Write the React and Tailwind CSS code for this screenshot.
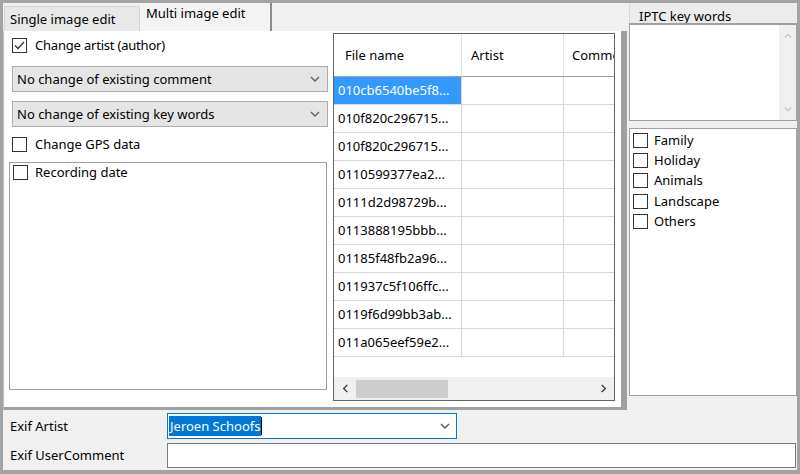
import React from 'react';

const files = [
  '010cb6540be5f8...',
  '010f820c296715...',
  '010f820c296715...',
  '0110599377ea2...',
  '0111d2d98729b...',
  '0113888195bbb...',
  '01185f48fb2a96...',
  '011937c5f106ffc...',
  '0119f6d99bb3ab...',
  '011a065eef59e2...',
];

const keywords = ['Family', 'Holiday', 'Animals', 'Landscape', 'Others'];

function Check({ checked, className = '' }) {
  return (
    <span className={`flex h-[15px] w-[15px] shrink-0 items-center justify-center border border-[#333] bg-white ${className}`}>
      {checked && (
        <svg width="13" height="13" viewBox="0 0 13 13">
          <polyline points="2,6.5 5,9.5 11,3" fill="none" stroke="#333" strokeWidth="1.3" />
        </svg>
      )}
    </span>
  );
}

function Chevron({ color = '#555', dir = 'down', size = 12 }) {
  const pts = {
    down: '2,4 6,8 10,4',
    up: '2,8 6,4 10,8',
    left: '8,2 4,6 8,10',
    right: '4,2 8,6 4,10',
  }[dir];
  return (
    <svg width={size} height={size} viewBox="0 0 12 12">
      <polyline points={pts} fill="none" stroke={color} strokeWidth="1.4" />
    </svg>
  );
}

function Combo({ text }) {
  return (
    <div className="flex h-[26px] w-[316px] items-center justify-between border border-[#adadad] bg-[#e5e5e5] pl-[4px] pr-[6px]">
      <span>{text}</span>
      <Chevron color="#606060" />
    </div>
  );
}

export default function App() {
  return (
    <div
      className="flex h-[474px] w-[800px] flex-col border-x-[3px] border-t-[3px] border-b-4 border-[#a3a3a3] bg-[#f0f0f0] text-[13px] leading-none text-black"
      style={{ fontFamily: '"Noto Sans", "Open Sans", sans-serif' }}
    >
      {/* top split */}
      <div className="flex h-[407px]">
        {/* tab control */}
        <div className="flex w-[624px] flex-col">
          <div className="flex h-[28px] items-end">
            <div className="ml-[1px] flex h-[25px] w-[136px] items-center border border-b-0 border-[#d4d4d4] bg-[#e8e8e8] pl-[5px]">
              Single image edit
            </div>
            <div className="flex h-[28px] w-[132px] items-start border-r-2 border-[#8c8c8c] bg-[#f3f3f3] pl-[6px] pt-[4px]">
              Multi image edit
            </div>
          </div>
          <div className="flex flex-1 border-b-[3px] border-l border-r-[6px] border-[#a0a0a0] border-l-[#c0c0c0] bg-white">
            {/* left column */}
            <div className="flex w-[329px] flex-col pl-[5px]">
              <div className="mt-[7px] ml-[3px] flex items-center gap-[8px]">
                <Check checked />
                <span className="tracking-[-0.2px]">Change artist (author)</span>
              </div>
              <div className="mt-[13px] ml-[3px]">
                <Combo text="No change of existing comment" />
              </div>
              <div className="mt-[9px] ml-[3px]">
                <Combo text="No change of existing key words" />
              </div>
              <div className="mt-[10px] ml-[3px] flex items-center gap-[8px]">
                <Check />
                <span>Change GPS data</span>
              </div>
              <div className="mt-[10px] h-[228px] w-[318px] border border-[#a0a0a0] bg-white pl-[3px] pt-[2px]">
                <div className="flex items-center gap-[7px]">
                  <Check />
                  <span>Recording date</span>
                </div>
              </div>
            </div>
            {/* grid */}
            <div className="mt-[2px] flex h-[368px] w-[282px] flex-col overflow-hidden border border-[#646464] bg-white">
              <div className="flex h-[43px] shrink-0 border-b border-[#a0a0a0]">
                <div className="flex w-[128px] shrink-0 items-center border-r border-[#e3e3e3] pl-[11px]">File name</div>
                <div className="flex w-[102px] shrink-0 items-center border-r border-[#e3e3e3] pl-[9px]">Artist</div>
                <div className="flex min-w-0 flex-1 items-center overflow-hidden pl-[8px] whitespace-nowrap">Comme</div>
              </div>
              {files.map((f, i) => (
                <div key={i} className="flex h-[28px] shrink-0 border-b border-[#d8d8d8]">
                  <div
                    className={`flex w-[128px] shrink-0 items-center border-r border-[#d8d8d8] pl-[4px] whitespace-nowrap ${
                      i === 0 ? 'bg-[#3399ff] text-white' : ''
                    }`}
                  >
                    {f}
                  </div>
                  <div className="w-[102px] shrink-0 border-r border-[#d8d8d8]" />
                  <div className="flex-1" />
                </div>
              ))}
              <div className="flex-1" />
              <div className="flex h-[23px] shrink-0 items-center bg-[#f0f0f0]">
                <div className="flex w-[22px] justify-center">
                  <Chevron dir="left" color="#333" size={11} />
                </div>
                <div className="h-[18px] w-[92px] bg-[#cdcdcd]" />
                <div className="flex-1" />
                <div className="flex w-[22px] justify-center">
                  <Chevron dir="right" color="#333" size={11} />
                </div>
              </div>
            </div>
          </div>
        </div>
        {/* right panel */}
        <div className="ml-[2px] flex w-[168px] flex-col">
          <div className="h-[20px] overflow-hidden border-l border-[#d8d8d8] bg-[#ececec] pl-[9px] pt-[7px]">
            IPTC key words
          </div>
          <div className="flex h-[98px] border border-t-2 border-[#a0a0a0] bg-white">
            <div className="flex-1" />
            <div className="flex w-[17px] flex-col items-center justify-between bg-[#f0f0f0] py-[6px]">
              <Chevron dir="up" color="#c0c0c0" size={10} />
              <Chevron dir="down" color="#c0c0c0" size={10} />
            </div>
          </div>
          <div className="mt-[7px] flex h-[268px] flex-col border border-[#a0a0a0] bg-white pl-[3px] pt-[1px]">
            {keywords.map((k) => (
              <div key={k} className="flex h-[20.4px] items-center gap-[6px]">
                <Check />
                <span>{k}</span>
              </div>
            ))}
          </div>
        </div>
      </div>
      {/* bottom fields */}
      <div className="flex flex-1 flex-col">
        <div className="mt-[3px] flex h-[26px] items-center">
          <span className="w-[164px] pl-[7px]">Exif Artist</span>
          <div className="flex h-[26px] w-[290px] items-center justify-between border border-[#0078d7] bg-white pl-[1px] pr-[5px]">
            <div className="flex h-[20px] items-center">
              <span className="flex h-[20px] items-center bg-[#0078d7] px-[1px] text-white">Jeroen Schoofs</span>
              <span className="h-[18px] w-[1px] bg-black" />
            </div>
            <Chevron color="#555" />
          </div>
        </div>
        <div className="mt-[4px] flex h-[25px] items-center">
          <span className="w-[164px] pl-[7px]">Exif UserComment</span>
          <div className="h-[25px] w-[629px] border border-[#7a7a7a] bg-white" />
        </div>
      </div>
    </div>
  );
}
